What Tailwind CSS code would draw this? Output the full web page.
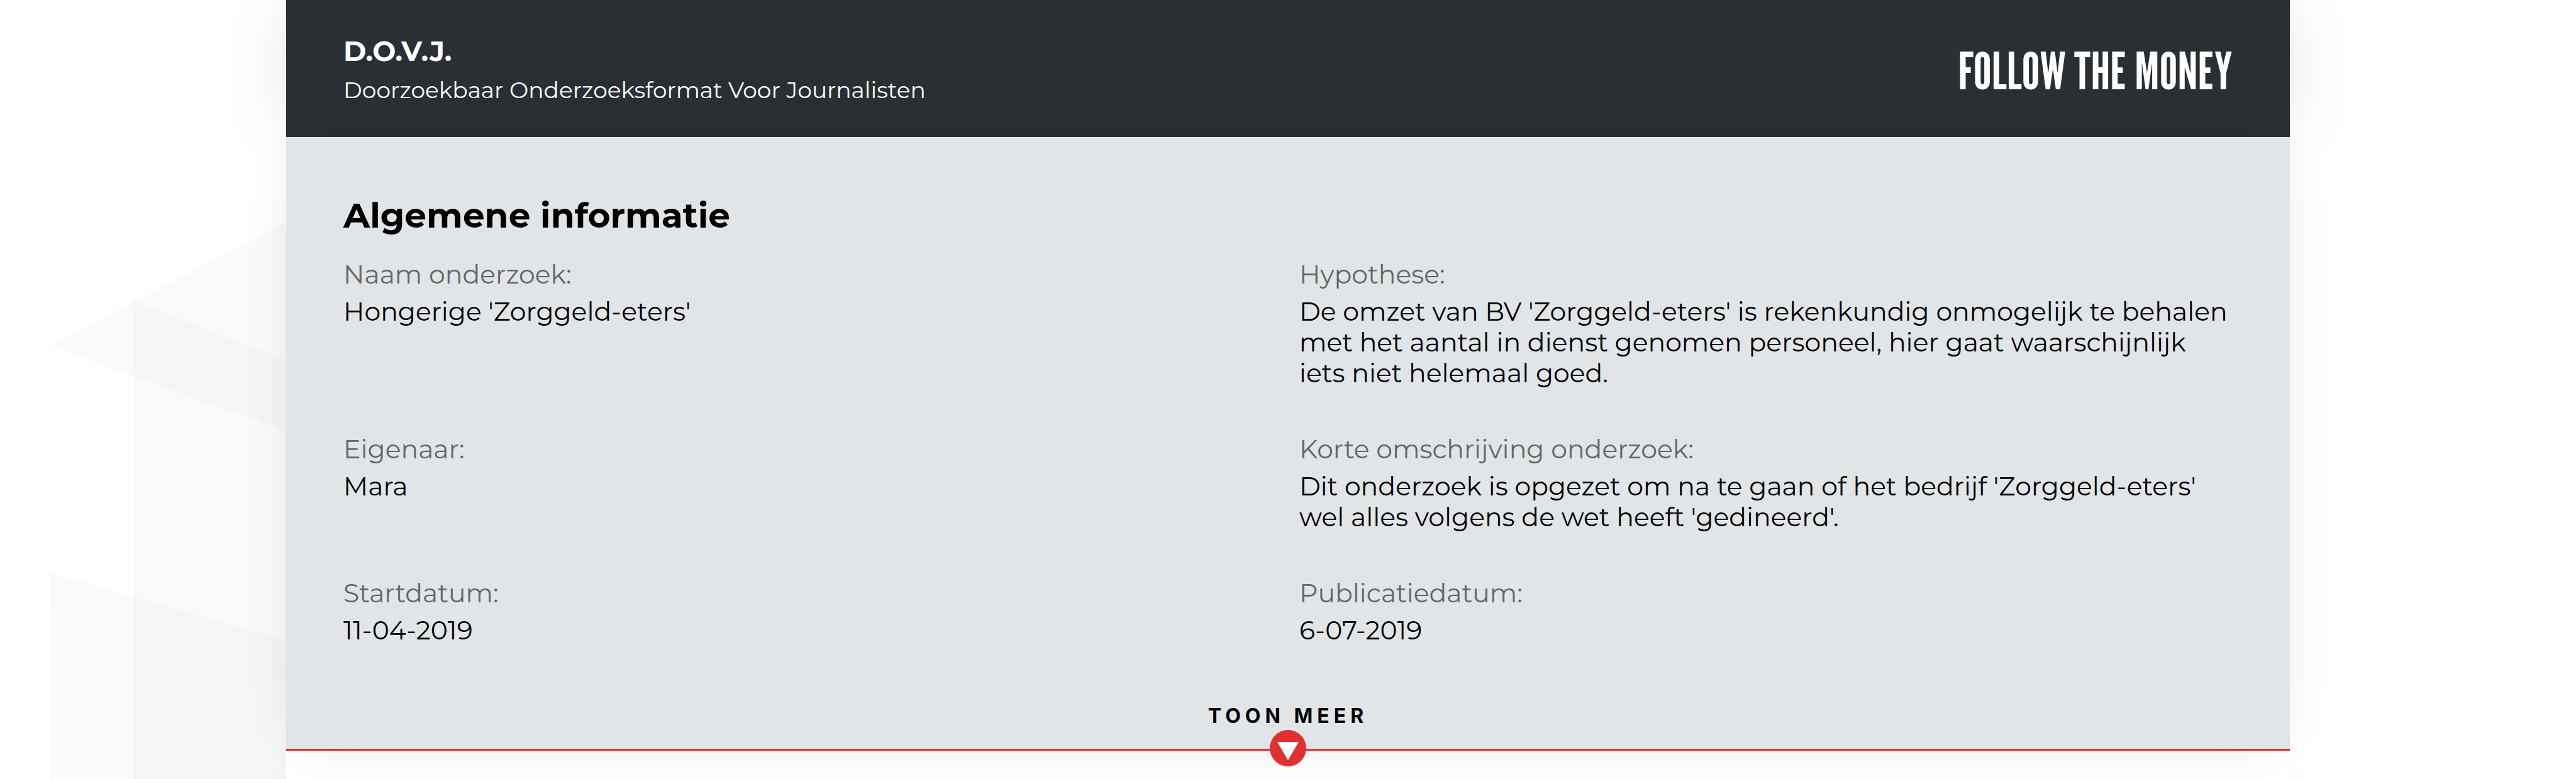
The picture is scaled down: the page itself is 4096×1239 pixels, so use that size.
<!DOCTYPE html>
<html lang="nl">
<head>
<meta charset="utf-8">
<title>D.O.V.J.</title>
<script src="https://cdn.jsdelivr.net/npm/@tailwindcss/browser@4"></script>
</head>
<body class="relative min-h-screen overflow-x-hidden bg-white font-['Montserrat','Inter',sans-serif] text-black">
  <svg class="absolute left-0 top-0 h-full w-1/9" viewBox="0 0 455 1239" preserveAspectRatio="none" fill="#000" fill-opacity=".021" aria-hidden="true">
    <path d="M80 550 455 353V687Z"/>
    <path d="M212 479 455 573V1239H212Z"/>
    <path d="M80 911 455 1019V1239H80Z"/>
  </svg>
  <main class="relative mx-auto flex min-h-screen w-7/9 flex-col">
    <header class="flex items-center justify-between bg-[#2a2f33] px-[91px] pb-[45px] pt-[52px] text-white shadow-[0_0_130px_-38px_rgba(0,0,0,0.25)]">
      <div>
        <p class="text-[44px] font-bold leading-[59px]">D.O.V.J.</p>
        <p class="mt-[2px] text-[36px] leading-[60px]">Doorzoekbaar Onderzoeksformat Voor Journalisten</p>
      </div>
      <a href="#" class="font-['League_Gothic','Pathway_Gothic_One','Oswald',sans-serif] text-[81px] leading-[100px]">FOLLOW THE MONEY</a>
    </header>
    <section class="relative z-10 border-b-[3px] border-[#e03030] bg-[#e1e5e8] px-[91px] pb-[33px] pt-[82px] shadow-[0_0_90px_-38px_rgba(0,0,0,0.2)]">
      <h1 class="text-[55px] font-bold leading-[86px]">Algemene informatie</h1>
      <dl class="mt-[26px] grid grid-cols-2 gap-x-[36px] gap-y-[72px] text-[41px] leading-[49px]">
        <div><dt class="mb-[10px] text-[#666]">Naam onderzoek:</dt><dd>Hongerige 'Zorggeld-eters'</dd></div>
        <div><dt class="mb-[10px] text-[#666]">Hypothese:</dt><dd>De omzet van BV 'Zorggeld-eters' is rekenkundig onmogelijk te behalen met het aantal in dienst genomen personeel, hier gaat waarschijnlijk iets niet helemaal goed.</dd></div>
        <div><dt class="mb-[10px] text-[#666]">Eigenaar:</dt><dd>Mara</dd></div>
        <div><dt class="mb-[10px] text-[#666]">Korte omschrijving onderzoek:</dt><dd>Dit onderzoek is opgezet om na te gaan of het bedrijf 'Zorggeld-eters' wel alles volgens de wet heeft 'gedineerd'.</dd></div>
        <div><dt class="mb-[10px] text-[#666]">Startdatum:</dt><dd>11-04-2019</dd></div>
        <div><dt class="mb-[10px] text-[#666]">Publicatiedatum:</dt><dd>6-07-2019</dd></div>
      </dl>
      <button type="button" class="mx-auto mt-[93px] block font-['Inter',sans-serif] text-[32px] font-bold leading-[38px] tracking-[7px]">TOON MEER
        <svg class="absolute -bottom-[28px] left-1/2 size-[58px] -translate-x-1/2" viewBox="0 0 58 58" aria-hidden="true"><circle cx="29" cy="29" r="29" fill="#e03030"/><path d="M12 19H46L29 48Z" fill="#fff"/></svg>
      </button>
    </section>
    <div class="flex-1 bg-white shadow-[0_50px_60px_rgba(0,0,0,0.05)]"></div>
  </main>
</body>
</html>
